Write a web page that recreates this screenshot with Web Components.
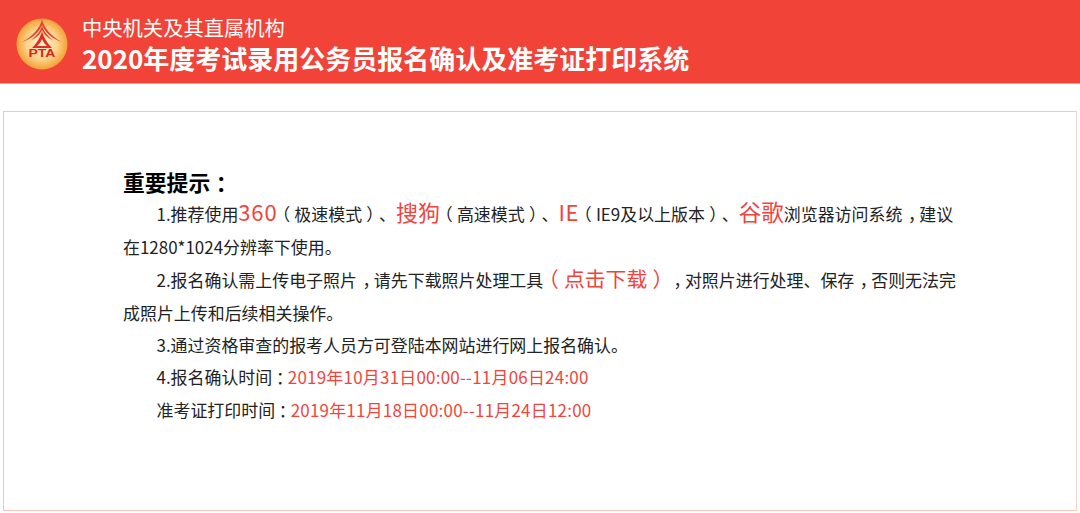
<!DOCTYPE html>
<html lang="zh-CN">
<head>
<meta charset="utf-8">
<title>报名确认及准考证打印系统</title>
<style>
  html, body { margin: 0; padding: 0; background: #fff; }
  body { font-family: "Noto Sans CJK SC", "Liberation Sans", sans-serif; overflow: hidden; }
</style>
</head>
<body>
<site-header>
  <span slot="sub">中央机关及其直属机构</span>
  <span slot="title">2020年度考试录用公务员报名确认及准考证打印系统</span>
</site-header>
<notice-panel>
  <span slot="heading">重要提示<p-mark>：</p-mark></span>
  <notice-line>1.推荐使用<red-text size="22" style="letter-spacing:.8px">360</red-text><p-mark>（</p-mark>极速模式<p-mark>）</p-mark>、<red-text size="22">搜狗</red-text><p-mark>（</p-mark>高速模式<p-mark>）</p-mark>、<red-text size="22" style="letter-spacing:.5px">IE</red-text><p-mark>（</p-mark>IE9及以上版本<p-mark>）</p-mark>、<red-text size="22.5">谷歌</red-text>浏览器访问系统<p-mark to="far">，</p-mark>建议<br>在1280*1024分辨率下使用。</notice-line>
  <notice-line style="margin-top:1px">2.报名确认需上传电子照片<p-mark to="far">，</p-mark>请先下载照片处理工具<red-text size="20.8"><p-mark>（</p-mark>点击下载<p-mark>）</p-mark></red-text><p-mark to="far">，</p-mark>对照片进行处理、保存<p-mark to="far">，</p-mark>否则无法完<br>成照片上传和后续相关操作。</notice-line>
  <notice-line>3.通过资格审查的报考人员方可登陆本网站进行网上报名确认。</notice-line>
  <notice-line style="margin-top:-1px">4.报名确认时间<p-mark to="tight">：</p-mark><red-text spaced>2019年10月31日00:00--11月06日24:00</red-text></notice-line>
  <notice-line>准考证打印时间<p-mark to="tight">：</p-mark><red-text spaced>2019年11月18日00:00--11月24日12:00</red-text></notice-line>
</notice-panel>

<script>
// Logo
const logoSvg = `
<svg width="52" height="52" viewBox="0 0 52 52">
  <defs>
    <radialGradient id="disc" cx="50%" cy="50%" r="50%">
      <stop offset="0" stop-color="#fff3d6"/>
      <stop offset="0.6" stop-color="#fcd48c"/>
      <stop offset="1" stop-color="#f3a035"/>
    </radialGradient>
  </defs>
  <circle cx="26" cy="26" r="25.5" fill="url(#disc)"/>
  <path d="M26 1 C25 9 16 19 6 24 C16 21 23 14 26 7 C29 14 36 21 46 24 C36 19 27 9 26 1Z" fill="#e8402f"/>
  <path d="M26 7 C25 12 21 18 15 22 C21 20 24 16 26 12 C28 16 31 20 37 22 C31 18 27 12 26 7Z" fill="#e8402f"/>
  <path d="M26 13 C25 18 21 25 16 30 L36 30 C31 25 27 18 26 13Z M26 21 C27 24 29 26 31 28 L21 28 C23 26 25 24 26 21Z" fill="#e02f22" fill-rule="evenodd"/>
  <text x="12.5" y="38.5" textLength="27" lengthAdjust="spacingAndGlyphs" font-family="Liberation Sans" font-size="11" font-weight="700" fill="#e2231a">PTA</text>
</svg>`;

class SiteHeader extends HTMLElement {
  constructor() {
    super();
    this.attachShadow({ mode: 'open' });
    this.shadowRoot.innerHTML = `
      <style>
        :host {
          display: flex;
          align-items: center;
          height: 84px;
          box-sizing: border-box;
          padding-left: 16px;
          background: #f24338;
          border-bottom: 1px solid #fb9d94;
          color: #fff;
        }
        .logo { display: flex; width: 52px; height: 52px; margin-top: 5px; }
        .text { display: flex; flex-direction: column; margin-left: 14px; padding-top: 3px; }
        .sub { font-size: 20.3px; line-height: 30px; white-space: nowrap; }
        .title { font-size: 26px; line-height: 32px; font-weight: 700; white-space: nowrap; }
      </style>
      <div class="logo">${logoSvg}</div>
      <div class="text">
        <div class="sub"><slot name="sub"></slot></div>
        <div class="title"><slot name="title"></slot></div>
      </div>`;
  }
}

class NoticePanel extends HTMLElement {
  constructor() {
    super();
    this.attachShadow({ mode: 'open' });
    this.shadowRoot.innerHTML = `
      <style>
        :host {
          display: block;
          box-sizing: border-box;
          width: 1074px;
          height: 400px;
          margin: 27px 0 0 3px;
          padding: 54px 80px 0 119px;
          border: 1px solid #f4c6c0;
          border-right-color: #f3d6d2;
          color: #222;
          text-spacing-trim: space-all;
          text-autospace: no-autospace;
        }
        h2 {
          margin: 0;
          font-size: 21.8px;
          line-height: 32px;
          font-weight: 700;
          color: #000;
        }
      </style>
      <h2><slot name="heading"></slot></h2>
      <slot></slot>`;
  }
}

class NoticeLine extends HTMLElement {
  constructor() {
    super();
    this.attachShadow({ mode: 'open' });
    this.shadowRoot.innerHTML = `
      <style>
        :host {
          display: block;
          font-size: 16.95px;
          line-height: 32.6px;
          white-space: nowrap;
          text-indent: 33.5px;
        }
      </style>
      <slot></slot>`;
  }
}

// no whitespace in these two shadow roots: it would show up as a gap in the line
class RedText extends HTMLElement {
  constructor() {
    super();
    this.attachShadow({ mode: 'open' });
    this.shadowRoot.innerHTML = `<style>:host { display: inline; color: #f0453c; line-height: 1; } :host([spaced]) { letter-spacing: .24px; }</style><slot></slot>`;
  }
  connectedCallback() {
    const size = this.getAttribute('size');
    if (size) this.style.fontSize = size + 'px';
  }
}

// full-width marks are centred in their cell in the original font:
// halt gives the half-width glyph, the margins put the cell back round it
class PMark extends HTMLElement {
  constructor() {
    super();
    this.attachShadow({ mode: 'open' });
    this.shadowRoot.innerHTML = `<style>:host { display: inline; font-feature-settings: "halt"; margin: 0 .25em; } :host([to=far]) { margin: 0 .17em 0 .33em; } :host([to=tight]) { margin: 0 .2em 0 .22em; }</style><slot></slot>`;
  }
}

customElements.define('site-header', SiteHeader);
customElements.define('notice-panel', NoticePanel);
customElements.define('notice-line', NoticeLine);
customElements.define('red-text', RedText);
customElements.define('p-mark', PMark);
</script>
</body>
</html>
